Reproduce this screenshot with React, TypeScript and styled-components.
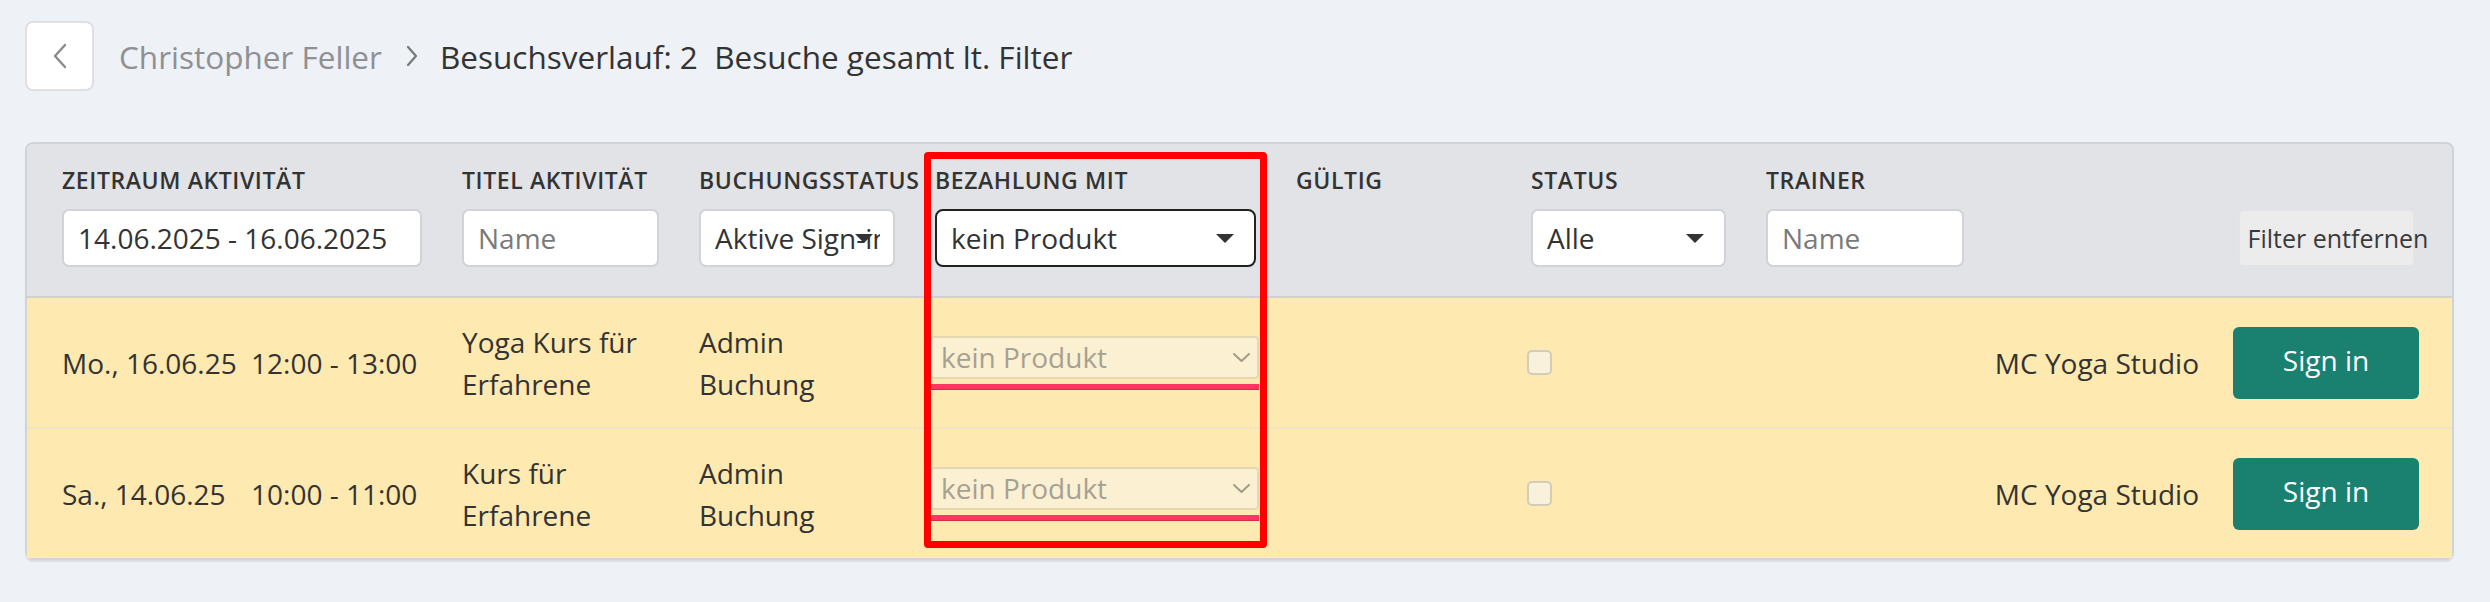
import styled, {createGlobalStyle} from 'styled-components';

const GlobalStyle = createGlobalStyle`
  body {
    margin: 0;
    background: #eef1f6;
    font-family: 'Open Sans', 'Noto Sans', sans-serif;
    color: #333;
  }
`;

const COLUMNS = '400px 237px 236px 361px 235px 235px 1fr 186px';

const Page = styled.div`
  padding: 21px 36px 40px 25px;
`;

const Breadcrumb = styled.div`
  display: flex;
  align-items: center;
  height: 70px;
  font-size: 31.5px;
`;

const BackButton = styled.button`
  width: 69px;
  height: 70px;
  box-sizing: border-box;
  display: flex;
  align-items: center;
  justify-content: center;
  background: #fff;
  border: 2px solid #dfe0e3;
  border-radius: 8px;
  padding: 0;
  margin-right: 25px;
`;

const Crumb = styled.span<{$current?: boolean}>`
  color: ${p => (p.$current ? '#333' : '#8e9094')};
  white-space: pre;
`;

const Separator = styled.span`
  display: flex;
  margin: 0 21px 0 23px;
`;

const Card = styled.div`
  position: relative;
  margin-top: 51px;
  border: 2px solid #d2d3d7;
  border-radius: 8px;
  box-shadow: 0 2px 1px rgba(0, 0, 0, 0.08);
`;

const HeaderRow = styled.div`
  display: grid;
  grid-template-columns: ${COLUMNS};
  align-items: start;
  padding: 21px 33px 29px 35px;
  background: #e2e3e7;
  border-bottom: 2px solid #cfd0d4;
  border-radius: 6px 6px 0 0;
`;

const HeaderCell = styled.div`
  padding-right: 40px;
  min-width: 0;
`;

const Label = styled.div`
  font-size: 23px;
  line-height: 30px;
  font-weight: 600;
  letter-spacing: 0.6px;
  text-transform: uppercase;
  white-space: nowrap;
  color: #333;
  margin-bottom: 14px;
`;

const TextInput = styled.input<{$width?: number}>`
  display: block;
  width: ${p => (p.$width ? `${p.$width}px` : '100%')};
  height: 58px;
  box-sizing: border-box;
  border: 2px solid #d2d3d6;
  border-radius: 7px;
  background: #fff;
  padding: 0 14px;
  font-family: inherit;
  font-size: 28px;
  color: #333;
  outline: none;

  &::placeholder {
    color: #7a7a7a;
  }
`;

const SelectBox = styled.div<{$active?: boolean}>`
  position: relative;
  height: 58px;
  box-sizing: border-box;
  display: flex;
  align-items: center;
  padding: 0 13px 0 14px;
  background: #fff;
  border: 2px solid ${p => (p.$active ? '#222' : '#d2d3d6')};
  border-radius: ${p => (p.$active ? '8px' : '7px')};
  font-size: 28px;
  color: #333;
  overflow: hidden;
  white-space: nowrap;
`;

const SelectText = styled.span`
  overflow: hidden;
  white-space: nowrap;
`;

const Caret = styled.span`
  position: absolute;
  right: 20px;
  top: 50%;
  margin-top: -4px;
  width: 0;
  height: 0;
  border-left: 9px solid transparent;
  border-right: 9px solid transparent;
  border-top: 9px solid #333;
`;

const FilterCell = styled.div`
  padding-top: 44px;
  display: flex;
  justify-content: center;
`;

const ClearButton = styled.button`
  width: 177px;
  height: 58px;
  flex-shrink: 0;
  box-sizing: border-box;
  background: #ececed;
  border: 2px solid #e4e4e6;
  border-radius: 6px;
  padding: 0 0 0 8px;
  text-align: left;
  white-space: nowrap;
  overflow: visible;
  font-family: inherit;
  font-size: 25px;
  color: #3a3a3a;
`;

const Row = styled.div`
  display: grid;
  grid-template-columns: ${COLUMNS};
  align-items: center;
  min-height: 129px;
  padding: 0 33px 0 35px;
  background: #fee9b1;
  font-size: 28px;
  line-height: 42px;
  color: #333;

  & + & {
    border-top: 2px solid #efe5c5;
  }

  &:last-child {
    border-radius: 0 0 6px 6px;
  }
`;

const Cell = styled.div<{$right?: boolean}>`
  padding-right: ${p => (p.$right ? '34px' : '40px')};
  text-align: ${p => (p.$right ? 'right' : 'left')};
  min-width: 0;
`;

const DateText = styled.span`
  display: inline-block;
  width: 189px;
  white-space: nowrap;
`;

const TimeText = styled.span`
  white-space: nowrap;
`;

const PaymentCell = styled.div`
  margin-left: -5px;
  width: 329px;
`;

const ProductSelect = styled.div`
  position: relative;
  height: 43px;
  box-sizing: border-box;
  display: flex;
  align-items: center;
  padding-left: 9px;
  background: #fcf0d2;
  border: 2px solid #e3d7b4;
  border-radius: 4px;
  color: #a7a192;
  font-size: 28px;
`;

const ChevronWrap = styled.span`
  position: absolute;
  right: 6px;
  top: 50%;
  margin-top: -5px;
  display: flex;
`;

const ErrorLine = styled.div`
  margin-top: 5px;
  height: 5px;
  background: #ff3562;
  border-bottom: 1px solid #d62a4c;
`;

const Checkbox = styled.span`
  display: block;
  width: 25px;
  height: 25px;
  margin-left: -4px;
  box-sizing: border-box;
  background: #faf1dc;
  border: 2px solid #d2ccbc;
  border-radius: 5px;
`;

const SignInButton = styled.button`
  width: 186px;
  height: 72px;
  background: #1a8070;
  border: none;
  border-radius: 6px;
  color: #fff;
  font-family: inherit;
  font-size: 28px;
  padding: 0 0 6px;
`;

const Highlight = styled.div`
  position: absolute;
  left: 897px;
  top: 8px;
  width: 343px;
  height: 396px;
  box-sizing: border-box;
  border: 7px solid #ff0000;
  border-radius: 4px;
  pointer-events: none;
`;

const visits = [
  {
    date: 'Mo., 16.06.25',
    time: '12:00 - 13:00',
    title: 'Yoga Kurs für Erfahrene',
    booking: 'Admin Buchung',
    studio: 'MC Yoga Studio',
  },
  {
    date: 'Sa., 14.06.25',
    time: '10:00 - 11:00',
    title: 'Kurs für Erfahrene',
    booking: 'Admin Buchung',
    studio: 'MC Yoga Studio',
  },
];

function ChevronLeft() {
  return (
    <svg width="16" height="26" viewBox="0 0 16 26">
      <polyline
        points="13,2 3,13 13,24"
        fill="none"
        stroke="#8a8a8a"
        strokeWidth="2.4"
        strokeLinecap="round"
        strokeLinejoin="round"
      />
    </svg>
  );
}

function ChevronRight() {
  return (
    <svg width="14" height="24" viewBox="0 0 14 24">
      <polyline
        points="3,3 11,12 3,21"
        fill="none"
        stroke="#777"
        strokeWidth="2.2"
        strokeLinecap="round"
        strokeLinejoin="round"
      />
    </svg>
  );
}

function ChevronDown() {
  return (
    <svg width="19" height="11" viewBox="0 0 19 11">
      <polyline
        points="2,2 9.5,9 17,2"
        fill="none"
        stroke="#a19b8b"
        strokeWidth="2"
        strokeLinecap="round"
        strokeLinejoin="round"
      />
    </svg>
  );
}

export default function App() {
  return (
    <Page>
      <GlobalStyle />
      <Breadcrumb>
        <BackButton aria-label="Zurück">
          <ChevronLeft />
        </BackButton>
        <Crumb>Christopher Feller</Crumb>
        <Separator>
          <ChevronRight />
        </Separator>
        <Crumb $current>Besuchsverlauf: 2  Besuche gesamt lt. Filter</Crumb>
      </Breadcrumb>

      <Card>
        <HeaderRow>
          <HeaderCell>
            <Label>Zeitraum Aktivität</Label>
            <TextInput defaultValue="14.06.2025 - 16.06.2025" />
          </HeaderCell>
          <HeaderCell>
            <Label>Titel Aktivität</Label>
            <TextInput placeholder="Name" />
          </HeaderCell>
          <HeaderCell>
            <Label>Buchungsstatus</Label>
            <SelectBox>
              <SelectText>Aktive Sign-in</SelectText>
              <Caret />
            </SelectBox>
          </HeaderCell>
          <HeaderCell>
            <Label>Bezahlung mit</Label>
            <SelectBox $active>
              <SelectText>kein Produkt</SelectText>
              <Caret />
            </SelectBox>
          </HeaderCell>
          <HeaderCell>
            <Label>Gültig</Label>
          </HeaderCell>
          <HeaderCell>
            <Label>Status</Label>
            <SelectBox>
              <SelectText>Alle</SelectText>
              <Caret />
            </SelectBox>
          </HeaderCell>
          <HeaderCell>
            <Label>Trainer</Label>
            <TextInput placeholder="Name" $width={198} />
          </HeaderCell>
          <FilterCell>
            <ClearButton>Filter entfernen</ClearButton>
          </FilterCell>
        </HeaderRow>

        {visits.map(v => (
          <Row key={v.date}>
            <Cell>
              <DateText>{v.date}</DateText>
              <TimeText>{v.time}</TimeText>
            </Cell>
            <Cell>{v.title}</Cell>
            <Cell>{v.booking}</Cell>
            <Cell>
              <PaymentCell>
                <ProductSelect>
                  kein Produkt
                  <ChevronWrap>
                    <ChevronDown />
                  </ChevronWrap>
                </ProductSelect>
                <ErrorLine />
              </PaymentCell>
            </Cell>
            <Cell />
            <Cell>
              <Checkbox />
            </Cell>
            <Cell $right>{v.studio}</Cell>
            <Cell>
              <SignInButton>Sign in</SignInButton>
            </Cell>
          </Row>
        ))}

        <Highlight />
      </Card>
    </Page>
  );
}
